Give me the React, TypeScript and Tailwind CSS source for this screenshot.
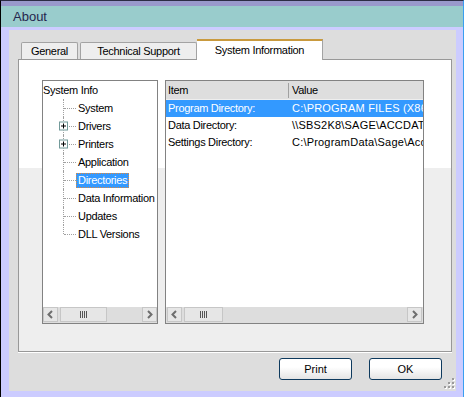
import React from 'react';

const treeItems = [
  { label: 'System' },
  { label: 'Drivers', plus: true },
  { label: 'Printers', plus: true },
  { label: 'Application' },
  { label: 'Directories', selected: true },
  { label: 'Data Information' },
  { label: 'Updates' },
  { label: 'DLL Versions' },
];

const rows = [
  { item: 'Program Directory:', value: 'C:\\PROGRAM FILES (X86)\\SAGE\\ACCOUNTS', selected: true },
  { item: 'Data Directory:', value: '\\\\SBS2K8\\SAGE\\ACCDATA' },
  { item: 'Settings Directory:', value: 'C:\\ProgramData\\Sage\\Accounts\\2012' },
];

function Chevron({ right }: { right?: boolean }) {
  return (
    <svg width="9" height="9" viewBox="0 0 9 9">
      <polyline
        points={right ? '3,1 6.5,4.5 3,8' : '6,1 2.5,4.5 6,8'}
        fill="none"
        stroke="#6e6e6e"
        strokeWidth="2"
      />
    </svg>
  );
}

function ScrollButton({ right }: { right?: boolean }) {
  return (
    <div className="flex h-[15px] w-[15px] items-center justify-center border border-[#c6c6c6] bg-[#e6e6e6]">
      <Chevron right={right} />
    </div>
  );
}

function Thumb({ width }: { width: string }) {
  return (
    <div className={`${width} flex h-[15px] items-center justify-center gap-[1px] border border-[#c6c6c6] bg-[#e6e6e6]`}>
      <span className="h-[7px] w-px bg-[#555]" />
      <span className="h-[7px] w-px bg-[#555]" />
      <span className="h-[7px] w-px bg-[#555]" />
      <span className="h-[7px] w-px bg-[#555]" />
    </div>
  );
}

function PlusBox() {
  return (
    <div className="absolute left-[16px] top-1/2 flex h-[9px] w-[9px] -translate-y-1/2 items-center justify-center border border-[#739a9a] bg-white">
      <svg width="7" height="7" viewBox="0 0 7 7">
        <path d="M1 3.5h5M3.5 1v5" stroke="#000" strokeWidth="1" />
      </svg>
    </div>
  );
}

function TreeRow({ label, plus, selected, last }: { label: string; plus?: boolean; selected?: boolean; last?: boolean }) {
  return (
    <div className="flex h-[18px] items-center">
      <div className="relative h-full w-[33px] shrink-0">
        <div className={`absolute left-[20px] top-0 border-l border-dotted border-[#a0a0a0] ${last ? 'h-1/2' : 'h-full'}`} />
        <div className="absolute left-[21px] top-1/2 w-[12px] border-t border-dotted border-[#a0a0a0]" />
        {plus && <PlusBox />}
      </div>
      <span
        className={`flex h-[15px] items-center whitespace-nowrap border px-[1px] ${
          selected ? 'border-dotted border-[#e0883a] bg-[#3399ff] text-white' : 'border-transparent'
        }`}
      >
        {label}
      </span>
    </div>
  );
}

function ResizeGrip() {
  const dots = [
    [8, 0],
    [4, 4], [8, 4],
    [0, 8], [4, 8], [8, 8],
  ];
  return (
    <svg width="11" height="11" viewBox="0 0 11 11" className="absolute bottom-[2px] right-[-3px]">
      {dots.map(([x, y]) => (
        <g key={`${x}-${y}`}>
          <rect x={x + 1} y={y + 1} width="2" height="2" fill="#ffffff" />
          <rect x={x} y={y} width="2" height="2" fill="#9a9a9a" />
        </g>
      ))}
    </svg>
  );
}

export default function App() {
  return (
    <div className="flex h-[397px] w-[464px] flex-col border-l border-r border-t border-l-black border-r-[#3a9ff0] border-t-[#2c2c44] bg-[#ccccff] font-['Liberation_Sans',Arial,sans-serif] text-[11px] tracking-[-0.3px] text-black">
      <div className="h-[5px] bg-[#9999cc]" />
      <div className="flex h-[21px] items-center bg-[#99cccc] pl-[12px] text-[13px] tracking-normal text-[#26264e]">About</div>

      <div className="flex flex-1 flex-col pb-[6px] pl-[8px] pr-[7px] pt-[3px]">
        <div className="flex flex-1 flex-col bg-[#dddddd] pl-[9px] pr-[4px] pt-[9px]">
          {/* tabs */}
          <div className="relative z-10 flex h-[20px] items-end pl-[3px]">
            <div className="flex h-[17px] w-[57px] items-center justify-center rounded-t-[2px] border border-b-0 border-[#a3a3a3] bg-[#eeeeee]">General</div>
            <div className="ml-[2px] flex h-[17px] w-[117px] items-center justify-center rounded-t-[2px] border border-b-0 border-[#a3a3a3] bg-[#eeeeee]">Technical Support</div>
            <div className="-mb-px flex h-[21px] w-[126px] items-center justify-center border-r border-t-2 border-r-[#a3a3a3] border-t-[#c99a3e] bg-white">System Information</div>
          </div>

          {/* panel */}
          <div className="h-[293px] border border-[#989898] bg-[linear-gradient(to_bottom,#ffffff_108px,#eeeeee_108px)] pl-[23px] pt-[20px] shadow-[0_1px_0_#ffffff]">
            <div className="flex gap-[7px]">
              {/* tree */}
              <div className="flex h-[244px] w-[116px] flex-col overflow-hidden border border-[#828282] bg-white">
                <div className="flex-1">
                  <div className="flex h-[18px] items-center whitespace-nowrap">System Info</div>
                  {treeItems.map((t, i) => (
                    <TreeRow key={t.label} label={t.label} plus={t.plus} selected={t.selected} last={i === treeItems.length - 1} />
                  ))}
                </div>
                <div className="flex h-[16px] items-start justify-between bg-[#dddddd]">
                  <div className="flex gap-[2px]">
                    <ScrollButton />
                    <Thumb width="w-[47px]" />
                  </div>
                  <ScrollButton right />
                </div>
              </div>

              {/* list */}
              <div className="flex h-[244px] w-[259px] flex-col overflow-hidden border border-[#828282] bg-white">
                <div className="flex h-[19px] shrink-0 items-center border-b border-[#eeeeee] bg-[#dedede]">
                  <div className="w-[122px] shrink-0 pl-[2px]">Item</div>
                  <div className="h-[15px] w-px bg-[#a0a0a0]" />
                  <div className="pl-[3px]">Value</div>
                </div>
                <div className="flex-1">
                  {rows.map((r) => (
                    <div
                      key={r.item}
                      className={`flex h-[17px] items-center whitespace-nowrap ${r.selected ? 'bg-[#3399ff] text-white' : ''}`}
                    >
                      <div className="w-[123px] shrink-0 pl-[2px]">{r.item}</div>
                      <div className="pl-[3px] tracking-[0.2px]">{r.value}</div>
                    </div>
                  ))}
                </div>
                <div className="flex h-[16px] items-start justify-between bg-[#dddddd] pl-px pr-px">
                  <div className="flex gap-[2px]">
                    <ScrollButton />
                    <Thumb width="w-[39px]" />
                  </div>
                  <ScrollButton right />
                </div>
              </div>
            </div>
          </div>

          {/* buttons */}
          <div className="relative flex flex-1 items-start justify-end gap-[17px] pr-[10px] pt-[6px]">
            <button className="h-[22px] w-[73px] rounded-[3px] border border-[#0e3a5e] bg-gradient-to-b from-white from-40% to-[#e4e4e4] tracking-normal">Print</button>
            <button className="h-[22px] w-[73px] rounded-[3px] border border-[#0e3a5e] bg-gradient-to-b from-white from-40% to-[#e4e4e4] tracking-normal">OK</button>
            <ResizeGrip />
          </div>
        </div>
      </div>
    </div>
  );
}
